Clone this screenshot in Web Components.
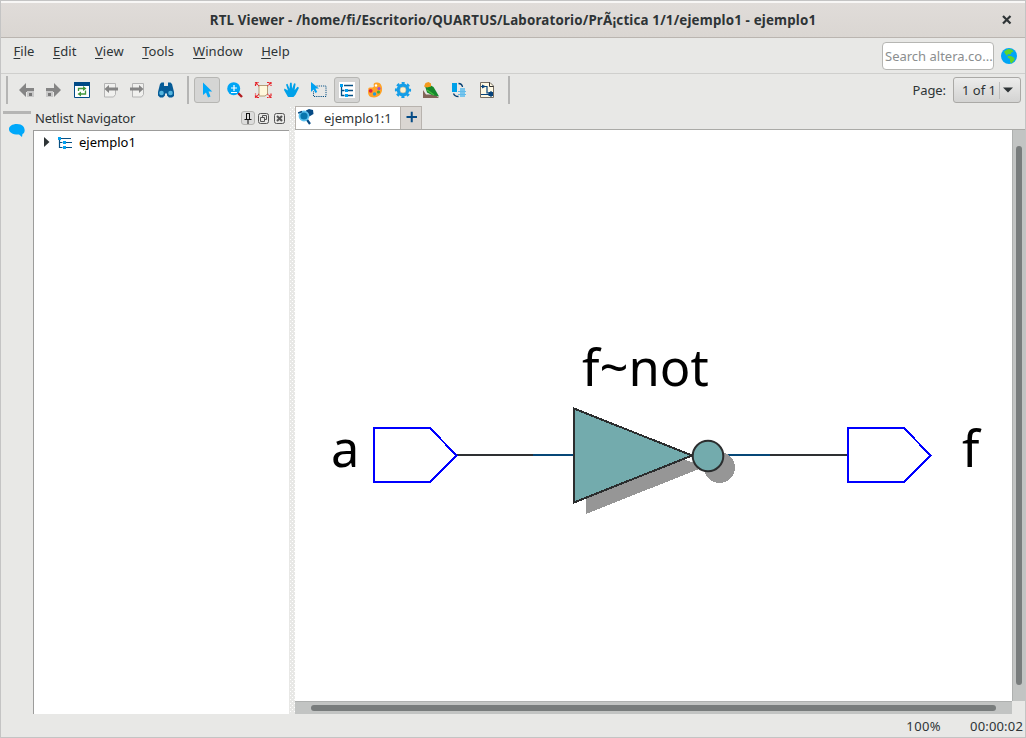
<!DOCTYPE html>
<html lang="en"><head><meta charset="utf-8"><title>RTL Viewer</title>
<style>html,body{margin:0;height:100%;overflow:hidden}body{font:13.33px "Noto Sans",sans-serif;color:#2e3436}</style></head>
<body><rtl-window></rtl-window>
<script>
const define=(name,html)=>{
  const t=document.createElement('template');t.innerHTML=html;
  customElements.define(name,class extends HTMLElement{
    constructor(){super();this.attachShadow({mode:'open'}).append(t.content.cloneNode(true));}
  });
};
const ICONS={
back:['12 74','<path d="M19 90l7-7v5h8v4h-8v5z" fill="#858585"/><path d="M27 91h7v6h-7z" fill="#c8c8c8"/><path d="M29 93h3v3h-3z" fill="#777"/>'],
fwd:['40 74','<path d="M61 90l-7-7v5h-8v4h8v5z" fill="#858585"/><path d="M46 91h7v6h-7z" fill="#c8c8c8"/><path d="M48 93h3v3h-3z" fill="#777"/>'],
refresh:['68 74','<path d="M74.5 82.5h15v15h-15z" fill="#fff" stroke="#004a86"/><path d="M74 82h16v4H74z" fill="#004a86"/><path d="M78.500 91v-2.500H84M85.500 90.500V94H80" fill="none" stroke="#42973c" stroke-width="1.300"/><path d="M83 86l3.500 2.500L83 91zM81 91.500L77.500 94l3.500 2.500z" fill="#42973c"/>'],
pageback:['96 74','<path d="M104.500 83.500h11v11l-2 2.500h-9z" fill="#f0f0ee" stroke="#b4b4b4"/><path d="M104.500 89l4.500-4v2.500h9v3h-9V93z" fill="#858585"/>'],
pagefwd:['124 74','<path d="M132.500 83.500h11v11l-2 2.500h-9z" fill="#f0f0ee" stroke="#b4b4b4"/><path d="M143.500 89l-4.500-4v2.500h-9v3h9V93z" fill="#858585"/>'],
find:['152 74','<path d="M160 84l1.500-1.500h2.500V86h4v-3.500h2.500L172 84l2 8v4l-2 1.500h-3l-2-2v-2h-2v2l-2 2h-3l-2-2V92z" fill="#075c97"/><circle cx="161.500" cy="93" r="2.300" fill="#55b5df"/><circle cx="170.500" cy="93" r="2.300" fill="#55b5df"/>'],
pointer:['193 74','<path d="M203 82.500V95l3-2.500 2 5 2.500-1-2-5h3.700z" fill="#00a8fa"/>'],
zoom:['221 74','<path d="M237 92l5 5" stroke="#b01c20" stroke-width="2.400"/><circle cx="233.700" cy="88.700" r="6.500" fill="#00a5f5"/><path d="M231 88h6M234 85v6M231 92.500h6" stroke="#fff" stroke-width="1.200"/>'],
fit:['249 74','<path d="M259 85.500h8.500v8.500l-2.500 2h-6z" fill="#fff8dc" stroke="#b49f78"/><path d="M255.500 86v-3.500h3.500m8 0h4v3.500m0 7.500v4h-4m-8 0h-3.500v-4M256 83l3 3m11.500-3l-3 3m-11.500 11l3-3m11.500 3l-3-3" fill="none" stroke="#e52229" stroke-width="1.200" stroke-dasharray="2.500 .7"/>'],
hand:['277 74','<path d="M288 97l-4-7 .5-1.500 3.500 2-2-6 1.500-.8 2 5 .5-6h1.700l.4 6 2-5.500 1.500.5-1 6.500 2.900-3.500 1.500 1-3.500 7-2 2.300z" fill="#00a1e9"/>'],
select:['305 74','<path d="M316.500 86h9.500v10.500h-12.500V91" fill="none" stroke="#075084" stroke-dasharray="1.200 1"/><path d="M311 82v10l2.600-2.500 1.800 3.500 1.800-1-1.800-3.500h3.600z" fill="#00a1f1"/>'],
tree:['333 74','<path d="M339 82h16v16h-16z" fill="#fff"/><path d="M341.500 86v9.500h3M341.500 90.500h3M344 85.500h9M348 90.500h5M348 95.500h5" stroke="#075084" fill="none" stroke-width="1.300"/><path d="M340 84h3v3h-3zM345 89h3v3h-3zM345 94h3v3h-3z" fill="#00a1f1"/>'],
palette:['361 74','<path d="M368.500 88c2-1 3.500 0 5-1s-2-4 3-4.500 6 5 5.500 8-3 7-8 7-6-3-6-6z" fill="#ffa226"/><circle cx="376" cy="85.500" r="1.200" fill="#fff"/><circle cx="379" cy="88.500" r="1.600" fill="#a24bd0"/><circle cx="370.700" cy="90.800" r="1.900" fill="#df2049"/><circle cx="374.500" cy="94" r="1.700" fill="#229cdb"/><circle cx="378.500" cy="92" r="1.600" fill="#48a83c"/>'],
gear:['389 74','<circle cx="403" cy="90" r="4.700" fill="none" stroke="#159ee8" stroke-width="3.400"/><circle cx="403" cy="90" r="7" fill="none" stroke="#159ee8" stroke-width="2.200" stroke-dasharray="3 2.498" stroke-dashoffset="1.500"/><circle cx="403" cy="90" r="3" fill="#fff1cc" stroke="#a9b6aa" stroke-width=".7"/>'],
bird:['417 74','<path d="M423 90l3 4.500h9l4 3.500h-16z" fill="#806457"/><path d="M425 86l5-1 3.500 2 3 5 2.500 4.500-7-1.500-5-2.500z" fill="#15882b"/><path d="M424 86.500l1.500-3.500 3-1 2.500 1.500v3l-4 1z" fill="#f49a1e"/><path d="M427 90l7 5" stroke="#45bd3e" stroke-width="1.500"/>'],
swap:['445 74','<path d="M452 83h5v9h-5z" fill="#00a1e9"/><path d="M460 88h5v9h-5z" fill="#78c5ec"/><path d="M458 91.500h8M458 94.500h8" stroke="#62bbea"/><path d="M458.500 83.500q3.500 0 4 3.500M453.500 93.500q1 3 5 3" fill="none" stroke="#073e70" stroke-width="1.300"/>'],
schem:['473 74','<path d="M480.500 82.500h9.500l3.500 3.500v11.500h-13z" fill="#fff9e3" stroke="#766d61"/><path d="M481 86.500h1.500M485 86.500h2v6.500h2M481 94.500h8M491 91v6" fill="none" stroke="#06427a" stroke-width="1.200"/><path d="M482 84.500l4 2-4 2zM488.500 92h4.500v4h-4.500z" fill="#06427a"/><path d="M489.500 82.500v4h4" fill="none" stroke="#333"/>']
};
customElements.define('tool-button',class extends HTMLElement{
  constructor(){super();this.attachShadow({mode:'open'});}
  connectedCallback(){const [o,p]=ICONS[this.getAttribute('icon')];
    this.shadowRoot.innerHTML=`<style>:host{display:flex;flex:none;width:28px;height:32px}div{width:26px;height:26px;margin:3px 1px}:host([active]) div{box-sizing:border-box;background:#d5d5d4;border:1px solid #b6b6b3;border-radius:3px}:host([active]) svg{margin:-4px -2px}svg{display:block;margin:-3px -1px}</style><div><svg width="28" height="32" viewBox="${o} 28 32">${p}</svg></div>`;}
});
define('tool-separator','<style>:host{display:block;flex:none;width:2px;height:28px;background:#b5b5b4}</style>');
define('title-bar',`<style>:host{display:grid;grid-template-columns:36px 1fr 36px;align-items:center;height:37px;box-sizing:border-box;border-top:2px solid #f8f7f6;border-bottom:1px solid #bab5b0;background:linear-gradient(#e0dcd9,#dad6d2);font-weight:700}span{grid-column:2;text-align:center;white-space:nowrap;font-size:13.330px;letter-spacing:.17px}svg{margin-left:13px}</style><span><slot></slot></span><svg width="10" height="10"><path d="M1 1l7.500 7.500m0-7.500l-7.500 7.500" stroke="#2e3436" stroke-width="2.200"/></svg>`);
define('menu-item',`<style>:host{display:block;white-space:nowrap}::slotted(u){text-decoration:underline;text-underline-offset:2px;text-decoration-thickness:1px;text-decoration-skip-ink:none}</style><slot></slot>`);
define('menu-bar',`<style>:host{display:flex;height:36px;box-sizing:border-box;border-bottom:1px solid #cfcfcd}nav{display:flex;gap:18.500px;padding:4px 0 0 12.500px;flex:1;font-size:13px;letter-spacing:.05px}.s{box-sizing:border-box;width:112px;height:28px;margin-top:4px;border:1px solid #b6b6b3;border-radius:4px;background:#fff;color:#8b8e8f;line-height:27px;padding-left:2px;white-space:nowrap;font-size:13px}.g{margin:9px 8px 0 7px}</style>
<nav><menu-item><u>F</u>ile</menu-item><menu-item><u>E</u>dit</menu-item><menu-item><u>V</u>iew</menu-item><menu-item><u>T</u>ools</menu-item><menu-item style="margin-left:.500px"><u>W</u>indow</menu-item><menu-item><u>H</u>elp</menu-item></nav><div class="s">Search altera.co...</div><svg class="g" width="16" height="18"><circle cx="8" cy="9" r="8" fill="#00a5f5"/><path d="M7 2l4 .5 1.500 2-2 1-1 2-2.500-.5L6 9 4 6.500 3 4.500zM7 9l3 0 3.500 2 0 2-3 3.500-1.500-1.500V12L6.500 10.500z" fill="#5fd52c"/></svg>`);
define('page-picker',`<style>:host{display:flex;align-items:flex-start;margin-right:4px}label{line-height:32px;margin-right:7px;font-size:13px;letter-spacing:-.1px}div{box-sizing:border-box;display:flex;align-items:center;width:68px;height:26px;margin-top:3px;border:1px solid #aaa9a6;border-radius:3px;background:linear-gradient(#ececeb,#d3d3d2);padding-left:8px}span{width:37px;border-right:1px solid #bebebd;line-height:17px;font-size:13px;white-space:nowrap}svg{margin-left:3px}</style><label>Page:</label><div><span>1 of 1</span><svg width="10" height="6"><path d="M0 .5h10L5 5.500z" fill="#2e3436"/></svg></div>`);
define('tool-bar',`<style>:host{display:flex;height:32px}.g{display:flex}tool-separator{margin-top:2px}.sp{flex:1}</style>
<tool-separator style="margin-left:5px"></tool-separator><div class="g" style="margin:0 7px 0 4px">${['back','fwd','refresh','pageback','pagefwd','find'].map(i=>`<tool-button icon="${i}"></tool-button>`).join('')}</div>
<tool-separator></tool-separator><div class="g" style="margin:0 3px 0 4px">${['pointer','zoom','fit','hand','select','tree','palette','gear','bird','swap','schem'].map(i=>`<tool-button icon="${i}"${i=='pointer'||i=='tree'?' active':''}></tool-button>`).join('')}</div><tool-separator style="margin-left:4px"></tool-separator><div class="sp"></div><page-picker></page-picker>`);
define('side-dock',`<style>:host{display:block;width:32px;flex:none}i{display:block;width:28px;height:3px;background:#b5b5b4;margin:5px 0 0 2px}svg{display:block;margin:10px 0 0 8px}</style><i></i><svg width="16" height="14"><path d="M8 0c9 0 9 9 5.500 10l-.5 3-3-2.500C-3 11-3 0 8 0z" fill="#00a8fa"/></svg>`);
define('netlist-panel',`<style>:host{display:flex;flex-direction:column;flex:none;width:256px}header{display:flex;height:24px;line-height:24px;padding-left:2px;font-size:13px}header span{flex:1;letter-spacing:-.18px}header svg{margin-top:5px;margin-right:2px}main{flex:1;border:solid #9c9c9b;border-width:1px 0 0 1px;background:#fff;color:#000}.r{display:flex;align-items:center;height:22px;padding:0 0 0 10px;font-size:13px}</style>
<header><span>Netlist Navigator</span><svg width="46" height="16" fill="none" stroke="#555"><rect x=".5" y=".5" width="13" height="13" rx="2.500" fill="#dcdcdb" stroke="#b6b6b3"/><path d="M5 2.500h4M5.500 2v6M8.500 2v6M3.500 8.500h7M7 9v4" stroke="#111"/><rect x="17.500" y="2.500" width="10" height="10" rx="2"/><path d="M21.500 6v-1.500h4v4H24M19.500 6.500h4v4h-4z"/><rect x="33.500" y="2.500" width="10" height="10" rx="2"/><path d="M36 5l5 5m0-5l-5 5" stroke-width="2"/></svg></header>
<main><div class="r"><svg width="6" height="10"><path d="M0 0l5.500 5-5.500 5z" fill="#2e3436"/></svg><svg width="15" height="12" style="margin:2px 6px 0 8px"><path d="M1.500 1v9.500h3M1.500 5.500h3M3 1.500h10M8 5.500h6M8 10.500h6" stroke="#075084" fill="none" stroke-width="1.200"/><path d="M0 0h3v3H0zM5 4h3v3H5zM5 9h3v3H5z" fill="#00a1f1"/></svg><span>ejemplo1</span></div></main>`);
define('dock-splitter',`<style>:host{display:block;flex:none;width:6px;background:#e8e8e6}svg{display:block}</style><svg width="6" height="608"><defs><pattern id="d" width="4" height="4" patternUnits="userSpaceOnUse"><path d="M1 1h1v1H1zM3 3h1v1H3z" fill="#fff"/></pattern></defs><path d="M0 0h6v607H0z" fill="url(#d)"/></svg>`);
define('tab-strip',`<style>:host{display:flex;height:24px;box-sizing:border-box;border-bottom:1px solid #aaaaa7}.t{box-sizing:border-box;width:106px;border:1px solid #b8b3ae;border-bottom:0;background:#fff;display:flex;padding-left:2px;line-height:23px;font-size:13px}.t svg{margin-right:10px}.p{box-sizing:border-box;width:21px;border:1px solid #b8b3ae;border-left:0;border-bottom:0;background:#dad6d2}svg{display:block}</style><div class="t"><svg width="16" height="19"><path d="M8 3.500l3-1.500 4 1 .5 4-2.500 1.500-3 1.500-3-4z" fill="#064b85"/><path d="M8.500 12l3.500 5" stroke="#064b85" stroke-width="2.200"/><circle cx="6" cy="9" r="4.500" fill="#0876ae" stroke="#5cc0ee" stroke-width="1.800"/><path d="M0 6l4-1.500" stroke="#064b85" stroke-width="1.500"/></svg>ejemplo1:1</div><div class="p"><svg width="20" height="22"><path d="M5.500 10h10.500M10.750 4.750v10.500" stroke="#064b85" stroke-width="2"/></svg></div>`);
define('schematic-canvas',`<style>:host{display:block;background:#fff;min-width:0}svg{display:block}text{font-family:"Noto Sans",sans-serif;fill:#000}</style><svg width="717" height="571" viewBox="295 130 717 571"><path d="M456 455h77M770 455h78" stroke="#2e3032" stroke-width="2"/><path d="M533 455h41M722 455h48" stroke="#064777" stroke-width="2"/><g fill="#969696" shape-rendering="crispEdges"><path d="M586 420.500L704 467 586 514z"/><circle cx="719.500" cy="467.500" r="15.500"/></g><path d="M574 408.500L692 455.500 574 502.500z" fill="#73abad" stroke="#2b2d2e" stroke-width="2" shape-rendering="crispEdges"/><circle cx="708" cy="456" r="15.300" fill="#73abad" stroke="#2b2d2e" stroke-width="2"/><path d="M374 428h56l26.500 27.500L430 482h-56zM848 428h56l26.500 27.500L904 482h-56z" fill="#fff" stroke="#00f" stroke-width="2" shape-rendering="crispEdges"/><text x="331" y="467" font-size="50.500">a</text><text x="582" y="386" font-size="50.700">f~not</text><text x="962" y="467" font-size="50.500">f</text></svg>`);
define('scroll-bar',`<style>:host{display:flex;box-sizing:border-box;background:#c2c4c3;border-top:1px solid #aeb0af;padding:3px 16px}i{display:block;flex:1;height:6px;border-radius:3px;background:#787c7c}:host([vertical]){border-top:0;border-left:1px solid #aeb0af;padding:16px 3px}:host([vertical]) i{height:auto;width:6px}</style><i></i>`);
define('status-bar',`<style>:host{display:flex;justify-content:flex-end;gap:29px;height:23px;line-height:24px;padding-right:2px;font-size:13px;letter-spacing:.17px}</style><span style="letter-spacing:.4px">100%</span><span>00:00:02</span>`);
define('rtl-window',`<style>:host{display:flex;flex-direction:column;box-sizing:border-box;width:1026px;height:738px;border:1px solid #c4c4c4;background:#e8e8e6}.b{display:flex;height:608px}.v{flex:1;display:flex;flex-direction:column;min-width:0}.c{flex:1;display:grid;grid-template-columns:717px 13px;grid-template-rows:571px 13px}</style>
<title-bar>RTL Viewer - /home/fi/Escritorio/QUARTUS/Laboratorio/PrÃ¡ctica 1/1/ejemplo1 - ejemplo1</title-bar><menu-bar></menu-bar><tool-bar></tool-bar><div class="b"><side-dock></side-dock><netlist-panel></netlist-panel><dock-splitter></dock-splitter><div class="v"><tab-strip></tab-strip><div class="c"><schematic-canvas></schematic-canvas><scroll-bar vertical></scroll-bar><scroll-bar></scroll-bar></div></div></div><status-bar></status-bar>`);
</script></body></html>
